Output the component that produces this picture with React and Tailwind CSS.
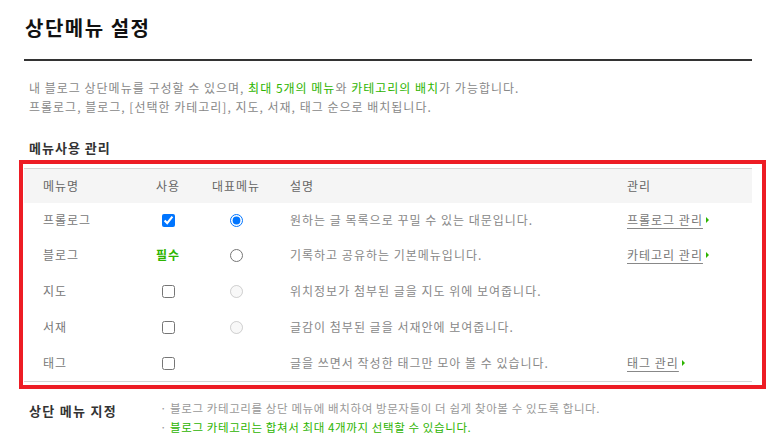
import React from 'react';

const GREEN = 'text-[#2db400]';

const rows = [
  { name: '프롤로그', use: 'check', checked: true, rep: 'on', desc: '원하는 글 목록으로 꾸밀 수 있는 대문입니다.', link: '프롤로그 관리' },
  { name: '블로그', use: 'required', rep: 'off', desc: '기록하고 공유하는 기본메뉴입니다.', link: '카테고리 관리' },
  { name: '지도', use: 'check', rep: 'disabled', desc: '위치정보가 첨부된 글을 지도 위에 보여줍니다.' },
  { name: '서재', use: 'check', rep: 'disabled', desc: '글감이 첨부된 글을 서재안에 보여줍니다.' },
  { name: '태그', use: 'check', rep: null, desc: '글을 쓰면서 작성한 태그만 모아 볼 수 있습니다.', link: '태그 관리' },
];

const cols = 'grid grid-cols-[120px_48px_88px_347px_125px] items-center';

const ManageLink = ({ label }) => (
  <span className="flex items-center">
    <a href="#" className="text-[#777] underline underline-offset-[3px] decoration-[#888]">
      {label}
    </a>
    {/* 작은 초록 화살표 */}
    <svg width="4" height="6" viewBox="0 0 4 6" className="ml-[3px]">
      <path d="M0 0 L3 3 L0 6 Z" fill="#2db400" />
    </svg>
  </span>
);

const App = () => {
  return (
    <div className="w-[774px] h-[445px] bg-white pl-[24px] font-['Noto_Sans_CJK_KR','Noto_Sans',sans-serif] overflow-hidden">
      <div className="w-[728px]">
        <h1 className="pl-[1px] pt-[14px] pb-[17px] text-[20px] leading-[28px] font-bold tracking-[1.5px] text-[#111] border-b-2 border-[#333]">
          상단메뉴 설정
        </h1>

        <div className="mt-[17px] pl-[5px] text-[12px] leading-[19px] tracking-[1px] text-[#888]">
          <p>
            내 블로그 상단메뉴를 구성할 수 있으며, <span className={GREEN}>최대 5개의 메뉴</span>와{' '}
            <span className={GREEN}>카테고리의 배치</span>가 가능합니다.
          </p>
          <p>프롤로그, 블로그, [선택한 카테고리], 지도, 서재, 태그 순으로 배치됩니다.</p>
        </div>

        <h2 className="mt-[23px] pl-[5px] text-[13px] leading-[18px] font-bold tracking-[1px] text-[#333]">메뉴사용 관리</h2>

        {/* 강조 표시 상자 */}
        <div className="mt-[3px] -ml-[5px] w-[747px] border-4 border-[#ed1c24] pl-[1px] pr-[10px] pt-[4px] pb-[3px]">
          <div className="border-t border-b border-[#d5d5d5] text-[12px] leading-[18px] tracking-[1px]">
            <div className={`${cols} h-[34px] bg-[#f5f5f5] text-[#666]`}>
              <span className="pl-[19px]">메뉴명</span>
              <span className="text-center">사용</span>
              <span className="text-center">대표메뉴</span>
              <span className="pl-[10px]">설명</span>
              <span>관리</span>
            </div>
            {rows.map((row, i) => (
              <div key={i} className={`${cols} ${i === 0 ? 'h-[34px]' : 'h-[36px]'} text-[#888]`}>
                <span className="pl-[19px] text-[#777]">{row.name}</span>
                <span className="flex justify-center">
                  {row.use === 'required' ? (
                    <b className={`${GREEN} font-bold`}>필수</b>
                  ) : (
                    <input type="checkbox" defaultChecked={row.checked} className="m-0 w-[13px] h-[13px]" />
                  )}
                </span>
                <span className="flex justify-center">
                  {row.rep && (
                    <input
                      type="radio"
                      name="rep"
                      defaultChecked={row.rep === 'on'}
                      disabled={row.rep === 'disabled'}
                      className="m-0 w-[13px] h-[13px]"
                    />
                  )}
                </span>
                <span className="pl-[10px]">{row.desc}</span>
                <span>{row.link && <ManageLink label={row.link} />}</span>
              </div>
            ))}
          </div>
        </div>

        <div className="mt-[10px] flex">
          <h3 className="w-[136px] pl-[5px] pt-[2px] text-[13px] leading-[19px] font-bold tracking-[1.3px] text-[#333]">상단 메뉴 지정</h3>
          <div className="text-[11.5px] leading-[19px] tracking-[0.6px]">
            <p className="text-[#999]">
              <span className="mr-[3px]">·</span>블로그 카테고리를 상단 메뉴에 배치하여 방문자들이 더 쉽게 찾아볼 수 있도록 합니다.
            </p>
            <p className={GREEN}>
              <span className="mr-[3px] text-[#999]">·</span>블로그 카테고리는 합쳐서 최대 4개까지 선택할 수 있습니다.
            </p>
          </div>
        </div>
      </div>
    </div>
  );
};

export default App;
